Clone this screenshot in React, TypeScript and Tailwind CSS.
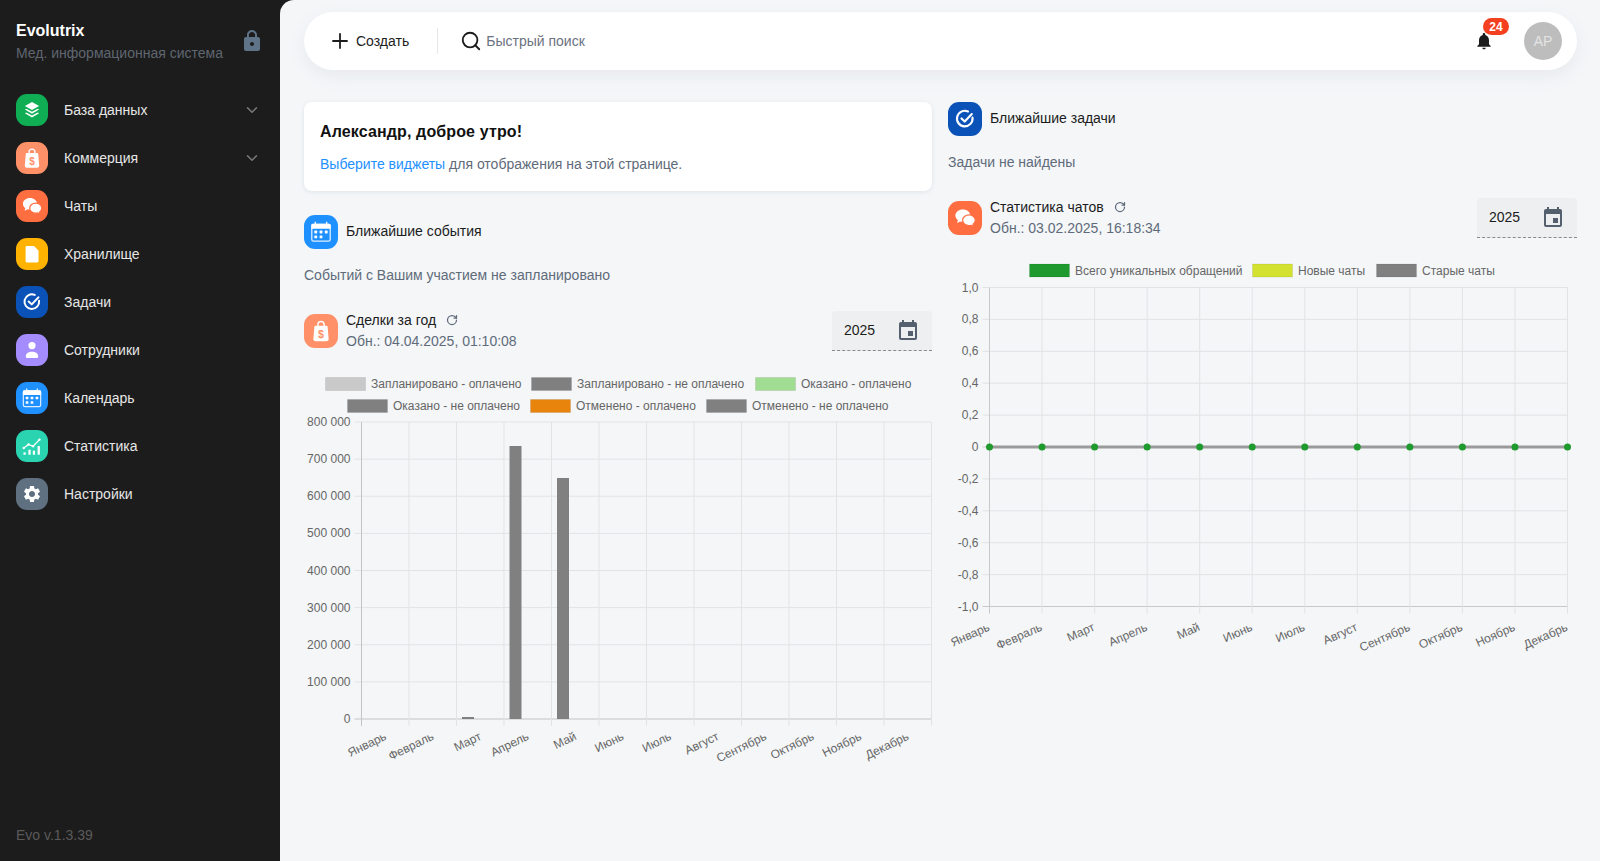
import type { ReactNode } from "react"
import { ChevronDown, Plus, Search, RotateCw } from "lucide-react"

const months = ["Январь", "Февраль", "Март", "Апрель", "Май", "Июнь", "Июль", "Август", "Сентябрь", "Октябрь", "Ноябрь", "Декабрь"]
const chartFont = '"Liberation Sans", Arial, sans-serif'

const LayersIcon = () => (
    <svg viewBox="0 0 24 24" className="w-full h-full" fill="white">
        <path d="M12 6 17.300 9 12 12 6.700 9z" />
        <path d="M7.700 11 6.700 11.700 12 14.800 17.300 11.700 16.300 11 12 13.400z" />
        <path d="M7.700 13.800 6.700 14.500 12 17.600 17.300 14.500 16.300 13.800 12 16.200z" />
    </svg>
)

const BagIcon = ({ bg }: { bg: string }) => (
    <svg viewBox="0 0 24 24" className="w-full h-full">
        <path d="M9.800 8.500V7.500a2.200 2.200 0 0 1 4.400 0v1" fill="none" stroke="white" strokeWidth="1" />
        <path d="M8.300 8.300h7.400c.5 0 .9.4 1 .9l.7 8.500c.1.900-.6 1.600-1.500 1.600H8.100c-.9 0-1.600-.7-1.500-1.600l.7-8.500c.1-.5.5-.9 1-.9z" fill="white" />
        <text x="12" y="17" textAnchor="middle" fontSize="7.500" fontWeight="700" fill={bg} fontFamily={chartFont}>$</text>
    </svg>
)

const ChatIcon = ({ bg }: { bg: string }) => (
    <svg viewBox="0 0 24 24" className="w-full h-full">
        <path d="M10.500 6c-3 0-5.300 1.900-5.300 4.300 0 1.300.7 2.500 1.800 3.300l-.6 1.900 2.400-1.100c.5.100 1.100.2 1.700.2 3 0 5.300-1.900 5.300-4.300S13.500 6 10.500 6z" fill="white" />
        <path d="M14.800 9.800c-2.500 0-4.500 1.700-4.500 3.800s2 3.800 4.500 3.800c.5 0 1-.1 1.400-.2l2 1-.5-1.700c1-.7 1.600-1.700 1.600-2.900 0-2.100-2-3.800-4.500-3.800z" fill="white" stroke={bg} strokeWidth="0.9" />
    </svg>
)

const FileIcon = () => (
    <svg viewBox="0 0 24 24" className="w-full h-full">
        <path d="M8.100 6h5.400l3.400 3.400v8c0 .5-.4.9-.9.9H8.100c-.5 0-.9-.4-.9-.9V6.900c0-.5.4-.9.9-.9z" fill="white" />
    </svg>
)

const CheckIcon = () => (
    <svg viewBox="0 0 24 24" className="w-full h-full" fill="none" stroke="white" strokeWidth="1.500" strokeLinecap="round" strokeLinejoin="round">
        <path d="M17.300 11a5.500 5.500 0 1 1-3.200-4.300" />
        <path d="m9.500 11.600 2.300 2.200 5-5.300" />
    </svg>
)

const PersonIcon = () => (
    <svg viewBox="0 0 24 24" className="w-full h-full" fill="white">
        <circle cx="12" cy="8.700" r="2.700" />
        <path d="M7.400 16.800c0-2.300 2-3.400 4.600-3.400s4.600 1.100 4.600 3.400c0 .7-.4 1.200-1 1.200H8.400c-.6 0-1-.5-1-1.200z" />
    </svg>
)

const CalendarIcon = () => (
    <svg viewBox="0 0 24 24" className="w-full h-full">
        <rect x="5.500" y="6.500" width="13" height="12" rx="1.200" fill="none" stroke="white" strokeWidth="0.900" opacity="0.85" />
        <path d="M6.200 6.300h11.600a1 1 0 0 1 1 1V9.700H5.200V7.300a1 1 0 0 1 1-1z" fill="white" />
        <path d="M8 4.800v2M16 4.800v2" stroke="white" strokeWidth="0.900" />
        <g fill="white">
            <rect x="7.300" y="11" width="2" height="2" rx=".4" />
            <rect x="11" y="11" width="2" height="2" rx=".4" />
            <rect x="14.700" y="11" width="2" height="2" rx=".4" />
            <rect x="7.300" y="14.400" width="2" height="2" rx=".4" />
            <rect x="11" y="14.400" width="2" height="2" rx=".4" />
        </g>
    </svg>
)

const StatsIcon = () => (
    <svg viewBox="0 0 24 24" className="w-full h-full">
        <g fill="white">
            <rect x="5.600" y="16.800" width="1.700" height="1.700" />
            <rect x="9.300" y="14.800" width="1.700" height="3.700" />
            <rect x="12.600" y="15.500" width="1.700" height="3" />
            <rect x="16.200" y="12" width="1.700" height="6.500" />
        </g>
        <path d="m5.800 13.500 3.600-2.700 3.400 1.400 4.800-5" fill="none" stroke="white" strokeWidth="1" />
        <g fill="white">
            <circle cx="5.800" cy="13.500" r=".9" />
            <circle cx="9.400" cy="10.800" r=".9" />
            <circle cx="12.800" cy="12.200" r=".9" />
            <circle cx="17.600" cy="7.200" r=".9" />
        </g>
    </svg>
)

const GearIcon = () => (
    <svg viewBox="-7 -7 38 38" className="w-full h-full" fill="white">
        <path d="M19.140 12.940c.04-.3.06-.61.06-.94 0-.32-.02-.64-.07-.94l2.030-1.580c.18-.14.23-.41.12-.61l-1.920-3.320c-.12-.22-.37-.29-.59-.22l-2.390.96c-.5-.38-1.030-.7-1.620-.94l-.36-2.540c-.04-.24-.24-.41-.48-.41h-3.840c-.24 0-.43.17-.47.41l-.36 2.540c-.59.24-1.130.57-1.620.94l-2.390-.96c-.22-.08-.47 0-.59.22L2.740 8.870c-.12.21-.08.47.12.61l2.030 1.580c-.05.3-.09.63-.09.94s.02.64.07.94l-2.030 1.580c-.18.14-.23.41-.12.61l1.920 3.320c.12.22.37.29.59.22l2.390-.96c.5.38 1.030.7 1.620.94l.36 2.540c.05.24.24.41.48.41h3.840c.24 0 .44-.17.47-.41l.36-2.540c.59-.24 1.130-.56 1.620-.94l2.390.96c.22.08.47 0 .59-.22l1.920-3.320c.12-.22.07-.47-.12-.61l-2.010-1.580zM12 15.600c-1.980 0-3.600-1.620-3.600-3.600s1.620-3.600 3.600-3.600 3.600 1.620 3.600 3.600-1.620 3.600-3.600 3.600z" />
    </svg>
)

function Tile({ className, children }: { className: string; children: ReactNode }) {
    return <div className={`shrink-0 rounded-[11px] ${className}`}>{children}</div>
}

const navItems = [
    { label: "База данных", bg: "bg-[#0fae55]", icon: <LayersIcon />, sub: true },
    { label: "Коммерция", bg: "bg-[#ff9068]", icon: <BagIcon bg="#ff9068" />, sub: true },
    { label: "Чаты", bg: "bg-[#ff6e40]", icon: <ChatIcon bg="#ff6e40" /> },
    { label: "Хранилище", bg: "bg-[#ffb300]", icon: <FileIcon /> },
    { label: "Задачи", bg: "bg-[#0b52b8]", icon: <CheckIcon /> },
    { label: "Сотрудники", bg: "bg-[#a48cff]", icon: <PersonIcon /> },
    { label: "Календарь", bg: "bg-[#1e90ff]", icon: <CalendarIcon /> },
    { label: "Статистика", bg: "bg-[#2ad4b0]", icon: <StatsIcon /> },
    { label: "Настройки", bg: "bg-[#5f7081]", icon: <GearIcon /> },
]

function Sidebar() {
    return (
        <aside className="flex flex-col w-[280px] shrink-0 h-full text-[#e6e6e6]">
            <div className="flex justify-between items-center pr-4 pb-[2px] pl-4 h-[86px]">
                <div>
                    <div className="font-bold text-[16px] text-white leading-5">Evolutrix</div>
                    <div className="mt-[2px] text-[#5f6670] text-[14px] leading-5">Мед. информационная система</div>
                </div>
                <svg viewBox="0 0 24 24" className="mt-[-2px] w-6 h-6" fill="#5f7488">
                    <path d="M18 8h-1V6c0-2.760-2.240-5-5-5S7 3.240 7 6v2H6c-1.100 0-2 .9-2 2v10c0 1.100.9 2 2 2h12c1.100 0 2-.9 2-2V10c0-1.100-.9-2-2-2zm-6 9c-1.100 0-2-.9-2-2s.9-2 2-2 2 .9 2 2-.9 2-2 2zm3.100-9H8.900V6c0-1.710 1.390-3.100 3.100-3.100 1.710 0 3.100 1.390 3.100 3.100v2z" />
                </svg>
            </div>
            <nav>
                {navItems.map((item) => (
                    <div key={item.label} className="flex items-center gap-4 px-4 py-2 h-12">
                        <Tile className={`w-8 h-8 ${item.bg}`}>{item.icon}</Tile>
                        <span className="flex-1 text-[14px]">{item.label}</span>
                        {item.sub && <ChevronDown className="mr-[3px] w-[18px] h-[18px] text-[#7a7a7a]" strokeWidth={2} />}
                    </div>
                ))}
            </nav>
            <div className="mt-auto mb-4 px-4 text-[#5a5a5a] text-[14px] leading-5">Evo v.1.3.39</div>
        </aside>
    )
}

function TopBar() {
    return (
        <div className="flex items-center bg-white shadow-[0_6px_16px_rgba(145,158,171,0.12)] pr-[15px] pl-[24px] rounded-[29px] h-[58px]">
            <Plus className="w-[24px] h-[24px] text-[#1c1c1c]" strokeWidth={1.8} />
            <span className="ml-[4px] text-[#1c1c1c] text-[14px]">Создать</span>
            <div className="bg-[#e5e7ea] ml-[28px] w-px h-[26px]" />
            <Search className="ml-[22px] w-[22px] h-[22px] text-[#1c1c1c]" strokeWidth={2} />
            <span className="ml-[4px] text-[#6b7280] text-[14px]">Быстрый поиск</span>
            <div className="relative ml-auto w-5 h-5">
                <svg viewBox="0 0 24 24" className="w-5 h-5" fill="#1c1c1c">
                    <path d="M12 22c1.100 0 2-.9 2-2h-4c0 1.100.89 2 2 2zm6-6v-5c0-3.070-1.640-5.640-4.500-6.320V4c0-.83-.67-1.500-1.500-1.500s-1.500.67-1.500 1.500v.68C7.630 5.360 6 7.920 6 11v5l-2 2v1h16v-1l-2-2z" />
                </svg>
                <span className="top-[-13px] left-[9px] absolute flex justify-center items-center bg-[#f4401f] rounded-full w-[26px] h-[17px] font-bold text-[12px] text-white">24</span>
            </div>
            <div className="flex justify-center items-center bg-[#bdbdbd] ml-[30px] rounded-full w-[38px] h-[38px] text-[#e4e4e4] text-[14px]">АР</div>
        </div>
    )
}

function WidgetHead({ bg, icon, title, updated }: { bg: string; icon: ReactNode; title: string; updated?: string }) {
    return (
        <div className="flex items-center gap-2">
            <Tile className={`w-[34px] h-[34px] ${bg}`}>{icon}</Tile>
            <div className={updated ? "mt-[-1px]" : "mt-[-2px]"}>
                <div className="flex items-center gap-2 text-[#1c1c1c] text-[14px] leading-[20px]">
                    {title}
                    {updated && <RotateCw className="ml-[2px] w-[12px] h-[12px] text-[#5f6b7a]" strokeWidth={2.5} />}
                </div>
                {updated && <div className="mt-px text-[#5f6b7a] text-[14px] leading-[20px]">{updated}</div>}
            </div>
        </div>
    )
}

function YearField() {
    return (
        <div className="flex justify-between items-center bg-[#eeeff1] pr-[12px] pl-[12px] border-[#8a8a8a] border-b border-dashed rounded-t-[4px] w-[100px] h-10 text-[#1c1c1c] text-[14px]">
            2025
            <svg viewBox="0 0 24 24" className="w-[24px] h-[24px]" fill="#55606e">
                <path d="M19 19H5V8H19M16 1V3H8V1H6V3H5C3.890 3 3 3.890 3 5V19A2 2 0 0 0 5 21H19A2 2 0 0 0 21 19V5C21 3.890 20.100 3 19 3H18V1M17 12H12V17H17V12Z" />
            </svg>
        </div>
    )
}

type LegendItem = { x: number; y: number; color: string; label: string }

function Legend({ items }: { items: LegendItem[] }) {
    return (
        <>
            {items.map((it) => (
                <g key={it.label}>
                    <rect x={it.x + 0.5} y={it.y - 6.5} width={40} height={13} fill={it.color} stroke="rgba(0,0,0,0.08)" />
                    <text x={it.x + 46} y={it.y + 4} fontSize={12} fill="#666" fontFamily={chartFont}>{it.label}</text>
                </g>
            ))}
        </>
    )
}

function DealsChart() {
    const left = 57.5
    const right = 627.5
    const top = 54
    const bottom = 351
    const colW = (right - left) / 12
    const rowH = (bottom - top) / 8
    const yLabels = ["800 000", "700 000", "600 000", "500 000", "400 000", "300 000", "200 000", "100 000", "0"]
    const legend: LegendItem[] = [
        { x: 21, y: 16, color: "#c9c9c9", label: "Запланировано - оплачено" },
        { x: 227, y: 16, color: "#808080", label: "Запланировано - не оплачено" },
        { x: 451, y: 16, color: "#a0dc92", label: "Оказано - оплачено" },
        { x: 43, y: 38, color: "#808080", label: "Оказано - не оплачено" },
        { x: 226, y: 38, color: "#e8830c", label: "Отменено - оплачено" },
        { x: 402, y: 38, color: "#808080", label: "Отменено - не оплачено" },
    ]
    const bars = [
        { x: 158, y: 349, h: 2, },
        { x: 205.500, y: 78, h: 273 },
        { x: 253, y: 110, h: 241 },
    ]
    return (
        <svg width={628} height={430} className="block mt-[17px]">
            <Legend items={legend} />
            {yLabels.map((l, i) => (
                <g key={l}>
                    <line x1={left - 7} x2={right} y1={top + i * rowH} y2={top + i * rowH} stroke={i === 8 ? "#c4c4c4" : "#e2e3e5"} />
                    <text x={left - 11} y={top + i * rowH + 4} textAnchor="end" fontSize={12} fill="#666" fontFamily={chartFont}>{l}</text>
                </g>
            ))}
            {Array.from({ length: 13 }, (_, i) => (
                <line key={i} x1={left + i * colW} x2={left + i * colW} y1={top} y2={bottom + 7} stroke={i === 0 ? "#c4c4c4" : "#e2e3e5"} />
            ))}
            {bars.map((b) => (
                <rect key={b.x} x={b.x} y={b.y} width={12} height={b.h} fill="#808080" />
            ))}
            {months.map((m, i) => (
                <text
                    key={m}
                    transform={`translate(${left + (i + 0.5) * colW + 2} 371) rotate(-26)`}
                    textAnchor="end"
                    fontSize={12}
                    fill="#666"
                    fontFamily={chartFont}
                >
                    {m}
                </text>
            ))}
        </svg>
    )
}

function ChatsChart() {
    const left = 41.5
    const right = 619.5
    const top = 32.5
    const bottom = 351.5
    const colW = (right - left) / 11
    const rowH = (bottom - top) / 10
    const yLabels = ["1,0", "0,8", "0,6", "0,4", "0,2", "0", "-0,2", "-0,4", "-0,6", "-0,8", "-1,0"]
    const legend: LegendItem[] = [
        { x: 81, y: 15.500, color: "#1f9a2e", label: "Всего уникальных обращений" },
        { x: 304, y: 15.500, color: "#d3e231", label: "Новые чаты" },
        { x: 428, y: 15.500, color: "#808080", label: "Старые чаты" },
    ]
    const zero = top + 5 * rowH
    return (
        <svg width={629} height={410} className="block mt-[17px]">
            <Legend items={legend} />
            {yLabels.map((l, i) => (
                <g key={l}>
                    <line x1={left - 7} x2={right} y1={top + i * rowH} y2={top + i * rowH} stroke={i === 5 || i === 10 ? "#c9c9c9" : "#e2e3e5"} />
                    <text x={left - 11} y={top + i * rowH + 4} textAnchor="end" fontSize={12} fill="#666" fontFamily={chartFont}>{l}</text>
                </g>
            ))}
            {months.map((m, i) => (
                <line key={m} x1={left + i * colW} x2={left + i * colW} y1={top} y2={bottom + 7} stroke={i === 0 ? "#c9c9c9" : "#e2e3e5"} />
            ))}
            <line x1={left} x2={right} y1={zero} y2={zero} stroke="#9a9a9a" strokeWidth={3} />
            {months.map((m, i) => (
                <circle key={m} cx={left + i * colW} cy={zero} r={3.5} fill="#1f9a2e" />
            ))}
            {months.map((m, i) => (
                <text
                    key={m}
                    transform={`translate(${left + i * colW + 1} 375) rotate(-24)`}
                    textAnchor="end"
                    fontSize={12}
                    fill="#666"
                    fontFamily={chartFont}
                >
                    {m}
                </text>
            ))}
        </svg>
    )
}

export default function App() {
    return (
        <div className="flex bg-[#1c1c1c] w-full h-screen overflow-hidden font-['Liberation_Sans',Arial,sans-serif]">
            <Sidebar />
            <main className="flex-1 bg-[#f4f6f8] pt-3 pr-[23px] pl-6 rounded-tl-[14px] min-w-0">
                <TopBar />
                <div className="gap-4 grid grid-cols-[628px_1fr] mt-8">
                    <section>
                        <div className="bg-white shadow-[0_1px_4px_rgba(145,158,171,0.2)] px-4 pt-[18px] rounded-lg h-[89px]">
                            <h2 className="font-bold text-[#111] text-[16px] tracking-[0.13px] leading-6">Александр, доброе утро!</h2>
                            <p className="mt-[10px] text-[#5f6b7a] text-[14px] leading-5">
                                <span className="text-[#1e90ff]">Выберите виджеты</span> для отображения на этой странице.
                            </p>
                        </div>
                        <div className="mt-6">
                            <WidgetHead bg="bg-[#1e90ff]" icon={<CalendarIcon />} title="Ближайшие события" />
                        </div>
                        <p className="mt-4 text-[#5f6b7a] text-[14px] leading-5">Событий с Вашим участием не запланировано</p>
                        <div className="flex justify-between items-center mt-[26px]">
                            <WidgetHead bg="bg-[#ff9068]" icon={<BagIcon bg="#ff9068" />} title="Сделки за год" updated="Обн.: 04.04.2025, 01:10:08" />
                            <YearField />
                        </div>
                        <DealsChart />
                    </section>
                    <section>
                        <WidgetHead bg="bg-[#0b52b8]" icon={<CheckIcon />} title="Ближайшие задачи" />
                        <p className="mt-4 text-[#5f6b7a] text-[14px] leading-5">Задачи не найдены</p>
                        <div className="flex justify-between items-center mt-[26px]">
                            <WidgetHead bg="bg-[#ff6e40]" icon={<ChatIcon bg="#ff6e40" />} title="Статистика чатов" updated="Обн.: 03.02.2025, 16:18:34" />
                            <YearField />
                        </div>
                        <ChatsChart />
                    </section>
                </div>
            </main>
        </div>
    )
}
